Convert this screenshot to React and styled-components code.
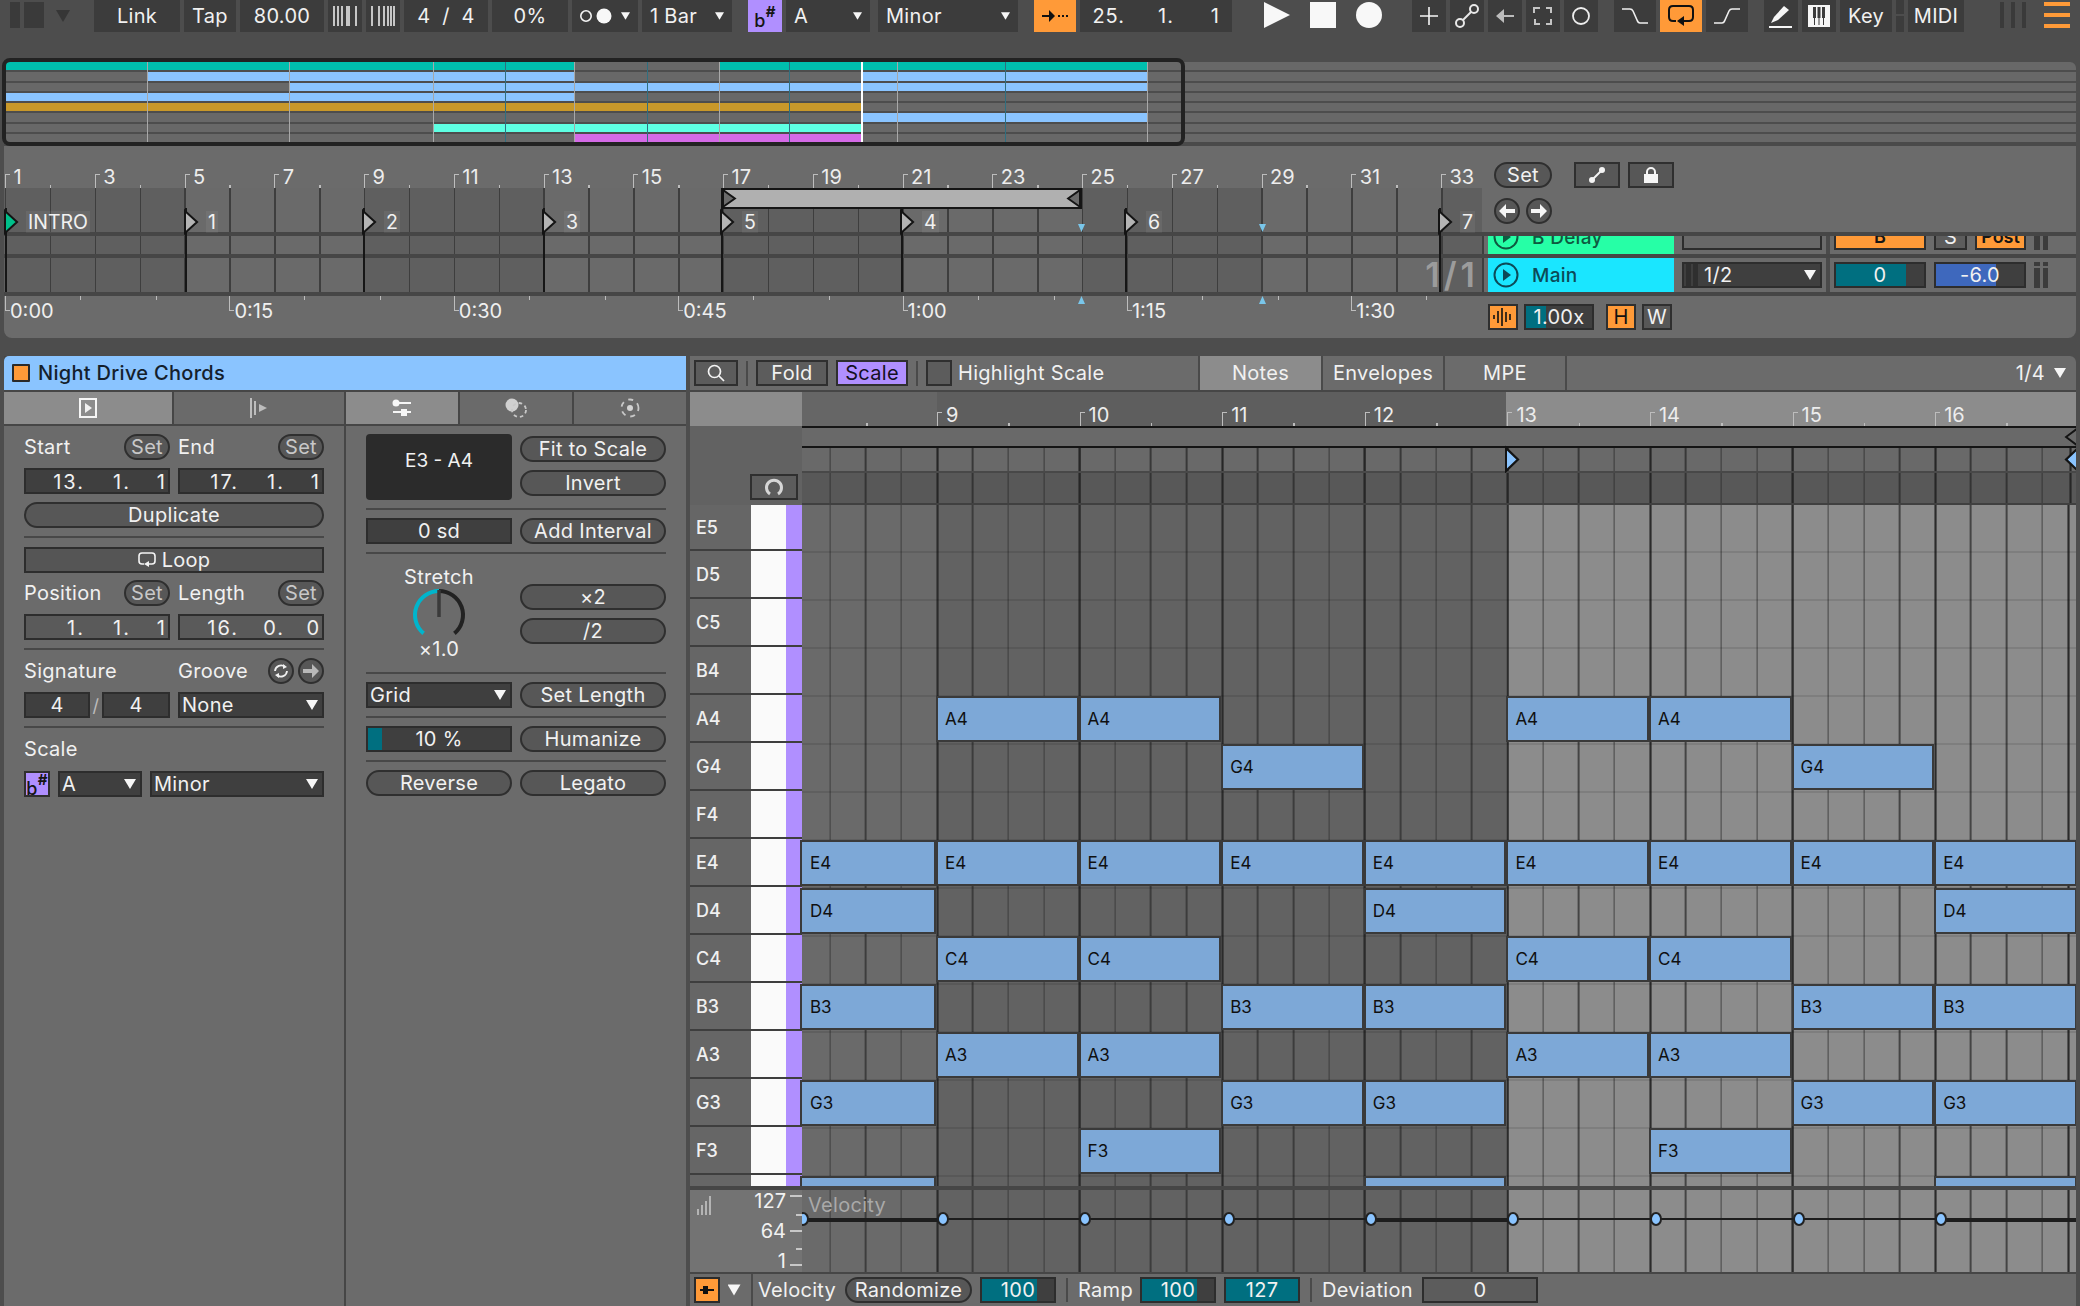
import React from 'react';
import styled, { createGlobalStyle, css } from 'styled-components';

const FONT = `"Inter","Noto Sans","Liberation Sans",sans-serif`;
const INK = '#f1f1f1';
const CELL = '#3c3c3c';
const PANEL = '#6b6b6b';
const LINE = '#2d2d2d';
const ORANGE = '#ff9a38';
const PURPLE = '#b08fff';
const TEAL = '#006f80';

const Global = createGlobalStyle`
  html, body { margin: 0; padding: 0; background: #4d4d4d; }
  body { font-family: ${FONT}; color: ${INK}; font-size: 20px; letter-spacing: .3px; -webkit-font-smoothing: antialiased; }
  * { box-sizing: border-box; }
`;

const Page = styled.div`
  width: 2080px; height: 1306px; overflow: hidden; background: #4d4d4d;
  display: flex; flex-direction: column;
`;

/* ---------- top bar ---------- */
const TopBar = styled.header`
  display: flex; height: 32px; flex: none; padding-left: 10px; align-items: stretch;
`;
const Cell = styled.div`
  flex: none; width: ${p => p.$w}px; margin-left: ${p => p.$ml || 0}px;
  background: ${p => p.$bg || CELL}; color: ${p => p.$fg || INK};
  display: flex; align-items: center; justify-content: center; font-size: 20px;
`;
const ShadeBar = styled.div`
  flex: none; width: ${p => p.$w}px; margin: 2px 0 4px ${p => p.$ml || 0}px; background: #3a3a3a;
`;
const CellRow = styled(Cell)`
  justify-content: space-between; padding: 0 8px;
`;
const Caret = styled.span`
  flex: none; display: inline-block; width: ${p => p.$s || 12}px; height: ${p => (p.$s || 12) * .85}px;
  background: ${p => p.$c || '#f6f6f6'}; clip-path: polygon(0 0, 100% 0, 50% 100%);
`;
const Flat = styled.span`font-size: 18px; letter-spacing: 0; color: #161616; font-weight: 600; line-height: 1;`;
const FlatSign = styled.span`font-size: 18px; color: #161616; font-weight: 500; line-height: 1; margin-top: 10px;`;
const SharpSign = styled.span`font-size: 15px; color: #161616; font-weight: 700; line-height: 1; margin-bottom: 10px;`;
const TimeGrid = styled.div`
  display: grid; width: 100%; height: 100%; align-items: center; text-align: right;
  grid-template-columns: ${p => p.$cols}; padding-right: ${p => p.$pr || 4}px;
  font-size: 20px; letter-spacing: ${p => p.$ls || 0}px;
`;

const Svg = styled.svg`display: block; flex: none; overflow: visible;`;

const BarsA = () => (
  <Svg width="24" height="20" viewBox="0 0 24 20" stroke="#f4f4f4" strokeWidth="1.5">
    <path d="M1 0v20M5 0v20M9 0v20M14 0v20M16 0v20M23 0v20" />
  </Svg>
);
const BarsB = () => (
  <Svg width="24" height="20" viewBox="0 0 24 20" stroke="#f4f4f4" strokeWidth="1.5">
    <path d="M1 0v20M8 0v20M13 0v20M17 0v20M20 0v20M23 0v20" />
  </Svg>
);
const MetroDots = () => (
  <Svg width="34" height="18" viewBox="0 0 34 18">
    <circle cx="6" cy="9" r="5.2" fill="none" stroke="#f4f4f4" strokeWidth="1.6" />
    <circle cx="24" cy="9" r="7.5" fill="#f8f8f8" />
  </Svg>
);
const FollowIcon = () => (
  <Svg width="26" height="16" viewBox="0 0 26 16">
    <path d="M0 8h11" stroke="#111" strokeWidth="2" />
    <path d="M7 2l6 6-6 6z" fill="#111" />
    <path d="M16 8h2M20 8h2M24 8h2" stroke="#111" strokeWidth="2" />
  </Svg>
);
const Icon = ({ kind }) => {
  switch (kind) {
    case 'plus': return <Svg width="20" height="20" viewBox="0 0 20 20" stroke="#f6f6f6" strokeWidth="1.6"><path d="M10 1v18M1 10h18" /></Svg>;
    case 'link': return <Svg width="24" height="24" viewBox="0 0 24 24" fill="none" stroke="#e8e8e8" strokeWidth="2"><circle cx="5" cy="19" r="4" /><circle cx="19" cy="5" r="4" /><path d="M8 16L16 8" /></Svg>;
    case 'back': return <Svg width="18" height="14" viewBox="0 0 18 14"><path d="M8 0L0 7l8 7V8h10V6H8z" fill="#bcbcbc" /></Svg>;
    case 'frame': return <Svg width="18" height="18" viewBox="0 0 18 18" fill="none" stroke="#c4c4c4" strokeWidth="2"><path d="M0 6V1h6M12 1h5v5M17 12v5h-5M6 17H1v-5" /></Svg>;
    case 'ring': return <Svg width="18" height="18" viewBox="0 0 18 18"><circle cx="9" cy="9" r="8" fill="none" stroke="#eee" strokeWidth="1.8" /></Svg>;
    case 'fall': return <Svg width="26" height="16" viewBox="0 0 26 16" fill="none" stroke="#efefef" strokeWidth="1.6"><path d="M0 1h8q2 0 3 2l4 9q1 3 3 3h8" /></Svg>;
    case 'rise': return <Svg width="26" height="16" viewBox="0 0 26 16" fill="none" stroke="#efefef" strokeWidth="1.6"><path d="M0 15h8q2 0 3-3l4-9q1-2 3-2h8" /></Svg>;
    case 'loop': return <Svg width="26" height="22" viewBox="0 0 26 22" fill="none" stroke="#111" strokeWidth="2"><path d="M8 16H5q-4 0-4-4V5q0-4 4-4h16q4 0 4 4v7q0 4-4 4h-7" /><path d="M16 11l-7 5 7 5z" fill="#111" stroke="none" /></Svg>;
    case 'pen': return <Svg width="24" height="24" viewBox="0 0 24 24"><path d="M2 19l3-6L15 2l5 4L9 16z" fill="#f6f6f6" /><path d="M0 23h23" stroke="#f6f6f6" strokeWidth="2" /></Svg>;
    case 'piano': return <Svg width="22" height="22" viewBox="0 0 22 22"><rect x="1" y="1" width="20" height="20" fill="#3c3c3c" stroke="#f6f6f6" strokeWidth="2" /><path d="M2 2h18v18H2z" fill="#f6f6f6" /><path d="M5 2h3v11H5zM9.5 2h3v11h-3zM14 2h3v11h-3z" fill="#3c3c3c" /><path d="M6.5 13v7M11 13v7M15.5 13v7" stroke="#3c3c3c" strokeWidth="1" /></Svg>;
    default: return null;
  }
};

const WhiteShape = styled.div`
  flex: none; width: 26px; margin-left: ${p => p.$ml}px; margin-top: 2px; height: 26px; background: #f8f8f8;
  clip-path: ${p => p.$clip || 'none'}; border-radius: ${p => p.$round ? '50%' : '0'};
`;
const SplitCell = styled.div`
  flex: none; margin-left: 4px; width: 8px; display: flex; flex-direction: column; gap: 2px;
`;
const SplitPart = styled.div`flex: ${p => p.$g}; background: ${CELL};`;
const BurgerWrap = styled.div`
  flex: none; margin: 2px 0 4px 18px; width: 26px; display: flex; flex-direction: column; justify-content: space-between;
`;
const BurgerLine = styled.div`height: 4px; background: ${ORANGE};`;

/* ---------- arrangement block ---------- */
const Block = styled.section`
  position: relative; flex: none; margin: 30px 4px 0 4px; width: 2072px;
`;
const Overview = styled.div`
  height: 80px; background: #4d4d4d; display: grid; grid-template-rows: repeat(8, 1fr); row-gap: 2px;
  border-radius: 6px 6px 0 0; overflow: hidden; position: relative;
`;
const OvRow = styled.div`display: flex; background: #686868; padding-left: 2px;`;
const OvClip = styled.div`
  flex: none; width: ${p => p.$w}px; background: ${p => p.$c || 'transparent'};
`;
const OvLine = styled.div`
  position: absolute; top: 0; bottom: 0; left: ${p => p.$x}px; width: ${p => p.$t || 1}px; background: ${p => p.$c || '#a8a8a8'};
`;
const OvFrame = styled.div`
  position: absolute; left: -2px; top: -4px; width: 1183px; height: 88px; border: 4px solid #222; border-radius: 8px; pointer-events: none;
`;
const DarkBar = styled.div`height: 4px; background: #4a4a4a;`;

const Timeline = styled.div`
  position: relative; display: grid; height: 192px; background: ${PANEL}; border-radius: 0 0 8px 8px; overflow: hidden;
  grid-template-columns: 1478px 594px;
  grid-template-rows: 42px 44px 4px 18px 4px 34px 4px 42px;
`;
const BAR2 = 89.75;
const Ruler = styled.div`display: flex; padding-left: 1px; overflow: hidden;`;
const BarCell = styled.div`
  position: relative; flex: none; width: ${p => p.$w}px; height: 100%; display: flex; align-items: flex-end;
  padding: 0 0 ${p => p.$pb || 0}px ${p => p.$pl || 8.5}px; font-size: 20px; line-height: 1; color: #ededed; letter-spacing: 0;
  &::before { content: ''; display: ${p => p.$plain ? 'none' : 'block'}; position: absolute; left: 0; bottom: 0; width: 4px; height: 13px;
    border-left: 1.5px solid #bdbdbd; border-top: 1.5px solid #bdbdbd; }
  &::after { content: ''; position: absolute; left: ${p => p.$tick || '50%'}; bottom: 0; width: 1.5px; height: 3px; background: #bdbdbd; }
`;
const TrackTop = styled.div`
  grid-row: span 2; display: grid; grid-template-columns: 26px 6px 26px 22px 46px 8px 46px;
  padding: 16px 0 0 12px; grid-template-rows: 26px 26px; row-gap: 10px; align-content: start;
`;
const laneBg = css`
  background-color: #666;
  background-image:
    repeating-linear-gradient(90deg, #3e3e3e 0 1.5px, transparent 1.5px 44.875px),
    repeating-linear-gradient(90deg, #5f5f5f 0 179.5px, #6a6a6a 179.5px 359px);
  background-position: 1px 0;
`;
const Lane = styled.div`
  ${laneBg}; display: flex; align-items: center; justify-content: flex-end; padding-right: 3px;
`;
const BigRatio = styled.span`font-size: 34px; font-weight: 600; color: #9c9c9c; line-height: 1; letter-spacing: 4px;`;
const Rule = styled.div`grid-column: 1 / -1; background: #464646;`;
const TimeRuler = styled.div`display: flex; padding-left: 1px; overflow: hidden;`;
const TimeCell = styled.div`
  position: relative; flex: none; width: 224.4px; padding: 5px 0 0 5px; font-size: 20px; color: #efefef;
  line-height: 20px; letter-spacing: 0;
  &::before { content: ''; position: absolute; left: 0; top: 0; width: 4px; height: 14px;
    border-left: 1.5px solid #bdbdbd; border-bottom: 1.5px solid #bdbdbd; }
  &::after { content: ''; position: absolute; left: 75px; top: 0; width: 75px; height: 4px;
    border-left: 1.5px solid #bdbdbd; border-right: 1.5px solid #bdbdbd; }
`;
const Pill = styled.div`
  height: 26px; border: 2px solid #2f2f2f; border-radius: 13px; background: #575757;
  display: flex; align-items: center; justify-content: center; white-space: nowrap;
  color: ${p => p.$dim ? '#c8c8c8' : INK};
  width: ${p => p.$w ? p.$w + 'px' : 'auto'}; flex: ${p => p.$w ? 'none' : '1'};
  grid-column: ${p => p.$span || 'auto'}; margin-left: ${p => p.$ml || 0}px;
`;
const Square = styled.div`
  height: 26px; border: 2px solid #2f2f2f; background: ${p => p.$bg || '#575757'};
  display: flex; align-items: center; justify-content: center; color: ${p => p.$fg || INK};
  width: ${p => p.$w ? p.$w + 'px' : 'auto'}; grid-column: ${p => p.$span || 'auto'}; flex: none;
  margin-left: ${p => p.$ml || 0}px;
`;
const RoundBtn = styled.div`
  width: 26px; height: 26px; border-radius: 50%; border: 2px solid #2f2f2f; background: #575757; flex: none;
  display: flex; align-items: center; justify-content: center; grid-column: ${p => p.$span || 'auto'};
`;
const ArrowGlyph = ({ dir, c }) => (
  <Svg width="16" height="14" viewBox="0 0 16 14" style={dir === 'r' ? { transform: 'scaleX(-1)' } : undefined}>
    <path d="M7 0L0 7l7 7V9h9V5H7z" fill={c || '#f6f6f6'} />
  </Svg>
);

const TrackStrip = styled.div`overflow: hidden; position: relative;`;
const TrackInner = styled.div`
  display: flex; height: 34px; margin-top: ${p => p.$offset || 0}px; border-left: 2px solid #3e3e3e; padding-left: 4px; align-items: stretch;
`;
const TrackName = styled.div`
  flex: none; width: 186px; background: ${p => p.$c}; color: ${p => p.$fg}; display: flex; align-items: center; gap: 13px; padding-left: 5px;
  font-weight: 500; font-size: 19px;
`;
const TrackCtl = styled.div`flex: none; display: flex; align-items: center; margin-left: ${p => p.$ml || 0}px;`;
const TrackFoot = styled.div`display: flex; align-items: center; align-self: start; margin-top: 8px;`;
const Vert = styled.div`flex: none; width: 4px; background: #4a4a4a; margin-left: 4px;`;
const Meter = styled.div`flex: none; margin: 4px 0 4px 8px; width: 14px; display: flex; justify-content: space-between;`;
const MeterBar = styled.div`width: 5.5px; background: linear-gradient(#3c3c3c 0 4px, transparent 4px 6px, #3c3c3c 6px);`;
const Field = styled.div`
  height: 26px; border: 2px solid ${LINE}; flex: ${p => p.$w ? 'none' : '1'}; width: ${p => p.$w ? p.$w + 'px' : 'auto'};
  background: ${p => p.$fill != null
    ? `linear-gradient(90deg, ${p.$c || TEAL} ${p.$fill}%, #3f3f3f ${p.$fill}%)`
    : (p.$bg || '#3f3f3f')};
  display: flex; align-items: center; justify-content: ${p => p.$start ? 'space-between' : 'center'};
  padding: ${p => p.$start ? '0 4px 0 2px' : '0'}; color: ${INK}; min-width: 0;
  margin-left: ${p => p.$ml || 0}px; white-space: nowrap;
`;
const DragDots = styled.span`
  flex: none; width: 12px; height: 22px; margin-right: 6px; display: block;
  background: repeating-linear-gradient(90deg, #2f2f2f 0 5px, transparent 5px 7px);
`;
const Locators = styled.div`
  position: absolute; left: 0; top: 62px; width: 1478px; height: 84px; pointer-events: none;
`;
const Locator = styled.div`
  position: absolute; left: ${p => p.$x}px; top: 0; bottom: 0; width: 2px; background: #161616;
`;
const LocFlag = styled.div`
  position: absolute; left: 0; top: 2px; display: flex; align-items: center; height: 24px; gap: 0; white-space: nowrap;
`;
const LocName = styled.span`
  font-size: 19.5px; line-height: 22px; margin-left: 8px; padding: 0 2px; background: rgba(255,255,255,.06); letter-spacing: 0;
`;
const Brace = styled.div`
  position: absolute; left: 717px; top: 42px; width: 361px; height: 21px; background: #b0b0b0;
  border-top: 2px solid #151515; border-bottom: 2px solid #151515; border-left: 2px solid #151515; border-right: 2px solid #151515;
  display: flex; justify-content: space-between; align-items: center;
`;
const CueMark = styled.div`
  position: absolute; left: ${p => p.$x}px; top: ${p => p.$y}px; width: 7px; height: 8px; background: #79c6ea;
  clip-path: ${p => p.$up ? 'polygon(50% 0, 100% 100%, 0 100%)' : 'polygon(0 0, 100% 0, 50% 100%)'};
`;

/* ---------- lower area ---------- */
const Lower = styled.div`
  flex: none; height: 950px; margin: 18px 4px 0 4px; display: flex; gap: 4px;
`;
const ClipPanel = styled.section`
  flex: none; width: 682px; display: flex; flex-direction: column; background: #464646;
`;
const TitleBar = styled.div`
  height: 34px; flex: none; background: #8ac4ff; color: #14202c; display: flex; align-items: center; gap: 8px; padding-left: 8px;
  font-size: 20px; font-weight: 500; border-radius: 5px 0 0 0;
`;
const Check = styled.div`
  width: 18px; height: 18px; border: 2px solid #2a2a2a; background: ${ORANGE}; border-radius: 1px;
`;
const TabStrip = styled.div`
  flex: none; height: 34px; margin-top: 2px; padding-bottom: 2px; display: grid; grid-template-columns: 168px 170px 112px 112px 112px; column-gap: 2px;
`;
const ClipTab = styled.div`
  background: ${p => p.$on ? '#8c8c8c' : '#6a6a6a'}; display: flex; align-items: center; justify-content: center;
`;
const ClipBody = styled.div`flex: 1; display: grid; grid-template-columns: 340px 340px; column-gap: 2px;`;
const Col = styled.div`background: ${PANEL}; padding: 8px 20px 0; display: flex; flex-direction: column;`;
const Row = styled.div`
  flex: none; display: flex; align-items: center; min-height: 26px; gap: ${p => p.$gap ?? 8}px; margin-top: ${p => p.$mt || 0}px;
`;
const HalfRow = styled.div`
  flex: none; display: grid; grid-template-columns: 146px 146px; column-gap: 8px; height: 26px; margin-top: ${p => p.$mt || 0}px; align-items: center;
`;
const LabelSet = styled.div`display: flex; align-items: center; justify-content: space-between;`;
const Divider = styled.div`height: 2px; flex: none; background: #484848; margin-top: ${p => p.$mt || 0}px;`;
const Label = styled.div`color: ${INK}; flex: none; line-height: 24px; margin-top: ${p => p.$mt || 0}px; width: ${p => p.$w ? p.$w + 'px' : 'auto'}; margin-left: ${p => p.$ml || 0}px;`;
const MiniIconBtn = styled(RoundBtn)``;
const RoundPair = styled.div`display: flex; gap: 4px;`;
const Split = styled.div`display: grid; grid-template-columns: 146px 146px; column-gap: 8px; margin-top: ${p => p.$mt || 0}px; flex: none; min-height: ${p => p.$h || 0}px;`;
const Stack = styled.div`
  display: flex; flex-direction: column; gap: ${p => p.$gap || 8}px; padding-top: ${p => p.$pt || 0}px;
  & > * { flex: none; }
`;
const RangeBox = styled.div`
  height: 66px; background: #2b2b2b; border-radius: 4px; display: flex; justify-content: center; padding-top: 15px; font-size: 19px; letter-spacing: 0;
`;
const KnobWrap = styled.div`display: flex; flex-direction: column; align-items: center;`;
const KnobValue = styled.div`margin-top: -4px; line-height: 22px;`;
const KnobLabel = styled.div`line-height: 22px;`;
const Slash = styled.span`flex: none; width: 12px; text-align: center; font-size: 18px; color: #bdbdbd;`;

/* ---------- piano roll ---------- */
const RollPanel = styled.section`
  flex: none; width: 1386px; display: flex; flex-direction: column; background: #464646; border-radius: 0 6px 0 0; overflow: hidden;
`;
const RollBar = styled.div`
  flex: none; height: 34px; background: ${PANEL}; display: flex; align-items: center; padding-left: 4px;
`;
const RollTab = styled.div`
  flex: none; width: ${p => p.$w}px; height: 100%; background: ${p => p.$on ? '#8c8c8c' : 'transparent'}; border-left: 2px solid #4a4a4a;
  margin-left: ${p => p.$ml || 0}px; display: flex; align-items: center; justify-content: center;
`;
const MiniSep = styled.div`flex: none; width: 2px; height: 25px; background: #4a4a4a; margin: 0 8px;`;
const Grow = styled.div`flex: 1;`;
const Quant = styled.div`display: flex; align-items: center; gap: 9px; padding-right: 10px;`;
const RollHead = styled.div`
  flex: none; height: 113px; margin-top: 2px; display: grid; grid-template-columns: 112px 1274px;
`;
const HeadSide = styled.div`
  background: linear-gradient(#8c8c8c 0 34px, #626262 34px); display: flex; align-items: flex-end; justify-content: flex-end; padding: 0 4px 5px 0;
`;
const HeadMain = styled.div`
  display: grid; grid-template-rows: 34px 2px 18px 2px 23px 2px 30px 2px; background: #1b1b1b; overflow: hidden;
`;
const HeadRuler = styled.div`
  display: flex; background: linear-gradient(90deg, #666 0 135px, #5e5e5e 135px 704px, #8c8c8c 704px);
`;
const HeadLine = styled.div`background: ${p => p.$c || '#151515'};`;
const StripA = styled.div`background: #696969; position: relative; display: flex; justify-content: flex-end; align-items: center;`;
const gridLines = css`
  background-image:
    repeating-linear-gradient(90deg, #262626 0 2px, transparent 2px 142.6px),
    repeating-linear-gradient(90deg, rgba(40,40,40,.75) 0 1.5px, transparent 1.5px 35.65px);
  background-position: -8.4px 0;
`;
const StripB = styled.div`
  ${gridLines}; background-color: ${p => p.$c}; position: relative; display: flex; justify-content: space-between; align-items: center;
  padding-left: 704px;
`;
const RollBody = styled.div`
  flex: none; height: 681px; display: grid; grid-template-columns: 112px 1274px; overflow: hidden;
`;
const Keys = styled.div`display: grid; grid-template-rows: 46px repeat(14, 48px); align-content: start;`;
const KeyRow = styled.div`
  display: grid; grid-template-columns: 61px 35px 16px; border-bottom: 2px solid #3e3e3e; background: #666;
  align-items: stretch;
`;
const KeyName = styled.div`display: flex; align-items: center; padding-left: 6px; font-size: 18px; font-weight: 500; color: #f0f0f0; letter-spacing: 0;`;
const WhiteKey = styled.div`background: #fafafa;`;
const PurpleKey = styled.div`background: ${PURPLE};`;
const rollBg = css`
  background-image:
    repeating-linear-gradient(90deg, #2b2b2b 0 2px, transparent 2px 142.6px),
    repeating-linear-gradient(90deg, rgba(50,50,50,.8) 0 1.5px, transparent 1.5px 35.65px),
    linear-gradient(90deg, #6a6a6a 0 135px, #626262 135px 704px, #8c8c8c 704px);
  background-position: -8.4px 0, -8.4px 0, 0 0;
`;
const Roll = styled.div`
  position: relative; ${rollBg};
  display: grid; grid-template-columns: 135px repeat(8, 142.6px); grid-template-rows: 46px repeat(14, 48px); align-content: start;
  &::before { content: ''; position: absolute; inset: 0; pointer-events: none;
    background: repeating-linear-gradient(180deg, rgba(0,0,0,.1) 0 2px, transparent 2px 48px); background-position: 0 -2px; background-size: 100% 48px; }
`;
const Note = styled.div`
  grid-column: ${p => p.$c}; grid-row: ${p => p.$r}; position: relative;
  margin: 3px 3px 3px ${p => p.$c === 1 ? 0 : 1}px;
  background: #7da8d7; outline: 2px solid #3a3a3a; outline-offset: 0; color: #101010; display: flex; align-items: center; padding-left: ${p => p.$c === 1 ? 8 : 7}px;
  font-size: 17px; letter-spacing: 0;
`;
const VelSec = styled.div`
  flex: none; height: 82px; margin-top: 4px; display: grid; grid-template-columns: 112px 1274px;
`;
const VelSide = styled.div`
  background: #737373; position: relative; display: flex; padding-right: 16px; flex-direction: column; gap: 8px; align-items: flex-end;
`;
const VelNum = styled.div`height: 22px; line-height: 22px; letter-spacing: 0;`;
const VelIconAt = styled.div`position: absolute; left: 6px; top: 5px;`;
const TickAt = styled.div`position: absolute; left: 100px; top: 0;`;
const VelMain = styled.div`position: relative; ${rollBg};`;
const VelCaption = styled.div`position: absolute; left: 6px; top: 3px; color: #a9a9a9;`;
const VelChart = styled.svg`position: absolute; inset: 0; width: 100%; height: 100%;`;
const RollFoot = styled.div`
  flex: none; height: 32px; margin-top: 2px; background: ${PANEL}; display: flex; align-items: center; padding-left: 4px;
`;
const FootSep = styled.div`
  flex: none; width: 2px; height: ${p => p.$full ? 32 : 24}px; background: #4a4a4a; margin: 0 ${p => p.$mr ?? 10}px 0 10px;
`;
const FootBtn = styled.div`
  flex: none; width: 26px; height: 26px; background: ${ORANGE}; border: 2px solid #2b2b2b; display: flex; align-items: center; justify-content: center;
`;

/* ---------- data ---------- */
const overview = [
  [[6, 574, '#00bfae'], [574, 719], [719, 1147, '#00bfae']],
  [[6, 147], [147, 574, '#8ac4ff'], [574, 861], [861, 1147, '#8ac4ff']],
  [[6, 289], [289, 1147, '#8ac4ff']],
  [[6, 574, '#8ac4ff'], [574, 1147]],
  [[6, 861, '#c8982a'], [861, 1147]],
  [[6, 861], [861, 1147, '#8ac4ff']],
  [[6, 433], [433, 861, '#5effe3'], [861, 1147]],
  [[6, 574], [574, 861, '#d46ae6'], [861, 1147]],
];
const ovLines = [[147], [289], [433], [574], [719], [861, '#ffffff', 2], [897], [1147]];
const ovDark = [505, 647, 789, 1005];

const bars = Array.from({ length: 17 }, (_, i) => 1 + i * 2);
const times = ['0:00', '0:15', '0:30', '0:45', '1:00', '1:15', '1:30'];
const locators = [
  { x: 1, name: 'INTRO', c: '#00c08a' }, { x: 181, name: '1' }, { x: 359, name: '2' }, { x: 539, name: '3' },
  { x: 717, name: '5' }, { x: 897, name: '4' }, { x: 1121, name: '6' }, { x: 1435, name: '7' },
];
const keys = ['E5', 'D5', 'C5', 'B4', 'A4', 'G4', 'F4', 'E4', 'D4', 'C4', 'B3', 'A3', 'G3', 'F3', ''];
const R = Object.fromEntries(keys.map((k, i) => [k || 'E3', i + 1]));
const pattern = {
  A: ['A4', 'E4', 'C4', 'A3'],
  B: ['A4', 'E4', 'C4', 'A3', 'F3'],
  C: ['G4', 'E4', 'B3', 'G3'],
  D: ['E4', 'D4', 'B3', 'G3', 'E3'],
};
const columns = [['D', 1], ['A', 2], ['B', 3], ['C', 4], ['D', 5], ['A', 6], ['B', 7], ['C', 8], ['D', 9]];
const rollRuler = [9, 10, 11, 12, 13, 14, 15, 16];
const velDots = [1, 141, 283, 427, 569, 711, 854, 997, 1139];

const BeatField = ({ a, b, c, bg }) => (
  <Field $bg={bg}>
    <TimeGrid $cols="1fr 46px 36px" $ls={2} $pr={1}>
      <span>{a}.</span><span>{b}.</span><span>{c}</span>
    </TimeGrid>
  </Field>
);

const Tri = ({ right, fill, h = 20 }) => (
  <Svg width="13" height={h} viewBox="0 0 13 20" preserveAspectRatio="none">
    <path d={right ? 'M13 0L1 10l12 10z' : 'M0 0l12 10L0 20z'} fill={fill} stroke="#141414" strokeWidth="2" />
  </Svg>
);

const Knob = () => (
  <Svg width="58" height="54" viewBox="-29 -27 58 54">
    <path d="M-15.4 18.4 A24 24 0 0 1 0 -24" fill="none" stroke="#00b5cc" strokeWidth="4" />
    <path d="M0 -24 A24 24 0 0 1 15.4 18.4" fill="none" stroke="#222" strokeWidth="4" />
    <path d="M0 -25V2" stroke="#3a3a3a" strokeWidth="3.5" />
  </Svg>
);

const PlayDisc = ({ c }) => (
  <Svg width="26" height="26" viewBox="0 0 26 26">
    <circle cx="13" cy="13" r="11.5" fill="none" stroke={c} strokeWidth="2" />
    <path d="M10 7l8 6-8 6z" fill={c} />
  </Svg>
);

const TrackRow = ({ offset, name, c, fg, children }) => (
  <TrackStrip>
    <TrackInner $offset={offset}>
      <TrackName $c={c} $fg={fg}><PlayDisc c={fg} />{name}</TrackName>
      {children}
      <Meter><MeterBar /><MeterBar /></Meter>
    </TrackInner>
  </TrackStrip>
);

export default function App() {
  return (
    <Page>
      <Global />
      <TopBar>
        <ShadeBar $w={10} /><ShadeBar $w={20} $ml={4} />
        <Cell $w={14} $ml={12} $bg="transparent"><Caret $s={14} $c="#363636" /></Cell>
        <Cell $w={86} $ml={24}>Link</Cell>
        <Cell $w={52} $ml={4}>Tap</Cell>
        <Cell $w={84} $ml={4}>80.00</Cell>
        <Cell $w={34} $ml={4}><BarsA /></Cell>
        <Cell $w={34} $ml={4}><BarsB /></Cell>
        <Cell $w={84} $ml={4}>4&nbsp; /&nbsp; 4</Cell>
        <Cell $w={76} $ml={4}>0%</Cell>
        <CellRow $w={66} $ml={4}><MetroDots /><Caret $s={9} /></CellRow>
        <CellRow $w={90} $ml={4}>1 Bar<Caret $s={9} /></CellRow>
        <Cell $w={34} $ml={16} $bg={PURPLE}><FlatSign>b</FlatSign><SharpSign>#</SharpSign></Cell>
        <CellRow $w={84} $ml={4}>A<Caret $s={9} /></CellRow>
        <CellRow $w={140} $ml={8}>Minor<Caret $s={9} /></CellRow>
        <Cell $w={42} $ml={16} $bg={ORANGE}><FollowIcon /></Cell>
        <Cell $w={152} $ml={4}><TimeGrid $cols="1fr 49px 46px" $pr={12} $ls={1}><span>25.</span><span>1.</span><span>1</span></TimeGrid></Cell>
        <WhiteShape $ml={32} $clip="polygon(0 0, 100% 50%, 0 100%)" />
        <WhiteShape $ml={20} />
        <WhiteShape $ml={20} $round />
        <Cell $w={34} $ml={30}><Icon kind="plus" /></Cell>
        <Cell $w={34} $ml={4}><Icon kind="link" /></Cell>
        <Cell $w={34} $ml={4}><Icon kind="back" /></Cell>
        <Cell $w={34} $ml={4}><Icon kind="frame" /></Cell>
        <Cell $w={34} $ml={4}><Icon kind="ring" /></Cell>
        <Cell $w={42} $ml={16}><Icon kind="fall" /></Cell>
        <Cell $w={42} $ml={4} $bg={ORANGE}><Icon kind="loop" /></Cell>
        <Cell $w={42} $ml={4}><Icon kind="rise" /></Cell>
        <Cell $w={34} $ml={16}><Icon kind="pen" /></Cell>
        <Cell $w={34} $ml={4}><Icon kind="piano" /></Cell>
        <Cell $w={52} $ml={4}>Key</Cell>
        <SplitCell><SplitPart $g={14} /><SplitPart $g={16} /></SplitCell>
        <Cell $w={56} $ml={4}>MIDI</Cell>
        <ShadeBar $w={4} $ml={36} /><ShadeBar $w={4} $ml={7} /><ShadeBar $w={4} $ml={7} />
        <BurgerWrap><BurgerLine /><BurgerLine /><BurgerLine /></BurgerWrap>
      </TopBar>

      <Block>
        <Overview>
          {overview.map((row, i) => (
            <OvRow key={i}>
              {row.map(([a, b, c], j) => <OvClip key={j} $w={b - a} $c={c} />)}
            </OvRow>
          ))}
          {ovLines.map(([x, c, t]) => <OvLine key={x} $x={x - 4} $c={c} $t={t} />)}
          {ovDark.map(x => <OvLine key={x} $x={x - 4} $c="#2f6f80" />)}
        </Overview>
        <OvFrame />
        <DarkBar />
        <Timeline>
          <Ruler>{bars.map(n => <BarCell key={n} $w={BAR2} $pb={1}>{n}</BarCell>)}</Ruler>
          <TrackTop>
            <Pill $span="1 / 4">Set</Pill>
            <Square $span="5 / 6">
              <Svg width="16" height="16" viewBox="0 0 16 16"><circle cx="3" cy="13" r="3" fill="#f4f4f4" /><circle cx="13" cy="3" r="3" fill="#f4f4f4" /><path d="M3 13L13 3" stroke="#f4f4f4" strokeWidth="2" /></Svg>
            </Square>
            <Square $span="7 / 8">
              <Svg width="14" height="16" viewBox="0 0 14 16"><path d="M3 8V5a4 4 0 0 1 8 0v3" fill="none" stroke="#f6f6f6" strokeWidth="2" /><rect y="7" width="14" height="9" fill="#f6f6f6" /></Svg>
            </Square>
            <RoundBtn $span="1 / 2"><ArrowGlyph /></RoundBtn>
            <RoundBtn $span="3 / 4"><ArrowGlyph dir="r" /></RoundBtn>
          </TrackTop>
          <Lane />
          <Rule />
          <Lane />
          <TrackRow offset={-16} name="B Delay" c="#26ffa6" fg="#0e5a40">
            <TrackCtl $ml={8}><Field $w={140} $bg="#686868" /></TrackCtl>
            <Vert />
            <TrackCtl $ml={4}>
              <Field $w={92} $bg={ORANGE}><Flat>B</Flat></Field>
              <Field $w={33} $ml={8} $bg="#5c5c5c">S</Field>
              <Field $w={51} $ml={8} $bg={ORANGE}><Flat>Post</Flat></Field>
            </TrackCtl>
          </TrackRow>
          <Rule />
          <Lane><BigRatio>1/1</BigRatio></Lane>
          <TrackRow name="Main" c="#1ae6ff" fg="#0c4a58">
            <TrackCtl $ml={8}><Field $w={140} $start>
              <Row $gap={0}><DragDots />1/2</Row><Caret $s={12} />
            </Field></TrackCtl>
            <Vert />
            <TrackCtl $ml={4}>
              <Field $w={92} $fill={80}>0</Field>
              <Field $w={92} $ml={8} $fill={68} $c="#3e68bd">-6.0</Field>
            </TrackCtl>
          </TrackRow>
          <Rule />
          <TimeRuler>{times.map(t => <TimeCell key={t}>{t}</TimeCell>)}</TimeRuler>
          <TrackFoot>
            <Square $w={30} $ml={6} $bg={ORANGE}>
              <Svg width="20" height="18" viewBox="0 0 20 18" stroke="#111" strokeWidth="1.6"><path d="M1 7v4M5 3v12M9 0v18M13 4v10M17 6v6" /></Svg>
            </Square>
            <Field $w={70} $ml={6} $fill={30}>1.00x</Field>
            <Square $w={30} $ml={12} $bg={ORANGE} $fg="#111">H</Square>
            <Square $w={30} $ml={6}>W</Square>
          </TrackFoot>
          <Brace>
            <Tri fill="#6b6b6b" h={17} /><Tri right fill="#6b6b6b" h={17} />
          </Brace>
          <Locators>
            {locators.map(l => (
              <Locator key={l.x} $x={l.x}>
                <LocFlag>
                  <Tri fill={l.c || '#b4b4b4'} h={22} />
                  <LocName>{l.name}</LocName>
                </LocFlag>
              </Locator>
            ))}
          </Locators>
          <CueMark $x={1074} $y={78} />
          <CueMark $x={1255} $y={78} />
          <CueMark $x={1074} $y={150} $up />
          <CueMark $x={1255} $y={150} $up />
        </Timeline>
      </Block>

      <Lower>
        <ClipPanel>
          <TitleBar><Check />Night Drive Chords</TitleBar>
          <TabStrip>
            <ClipTab $on>
              <Svg width="18" height="20" viewBox="0 0 18 20"><rect x="1" y="1" width="16" height="18" fill="none" stroke="#f6f6f6" strokeWidth="2" /><path d="M6 5l7 5-7 5z" fill="#f0f0f0" /></Svg>
            </ClipTab>
            <ClipTab>
              <Svg width="18" height="20" viewBox="0 0 18 20" fill="#bdbdbd"><path d="M0 0h2v20H0zM4 3h2v14H4zM9 6l8 4-8 4z" /></Svg>
            </ClipTab>
            <ClipTab $on>
              <Svg width="20" height="18" viewBox="0 0 20 18" fill="#f6f6f6"><circle cx="4" cy="4" r="3.5" /><path d="M4 3h15v2H4zM1 12h18v2H1z" /><rect x="9" y="10" width="6" height="7" /></Svg>
            </ClipTab>
            <ClipTab>
              <Svg width="22" height="20" viewBox="0 0 22 20"><circle cx="7" cy="7" r="6.5" fill="#d0d0d0" /><circle cx="14" cy="12" r="7" fill="none" stroke="#c8c8c8" strokeWidth="1.8" strokeDasharray="3.5 3" /></Svg>
            </ClipTab>
            <ClipTab>
              <Svg width="20" height="20" viewBox="0 0 20 20"><circle cx="10" cy="10" r="8.5" fill="none" stroke="#c8c8c8" strokeWidth="1.8" strokeDasharray="5 5" strokeDashoffset="2" /><circle cx="10" cy="10" r="3" fill="#d4d4d4" /></Svg>
            </ClipTab>
          </TabStrip>
          <ClipBody>
            <Col>
              <HalfRow>
                <LabelSet>Start<Pill $w={46} $dim>Set</Pill></LabelSet>
                <LabelSet>End<Pill $w={46} $dim>Set</Pill></LabelSet>
              </HalfRow>
              <HalfRow $mt={8}><BeatField a={13} b={1} c={1} /><BeatField a={17} b={1} c={1} /></HalfRow>
              <Row $mt={8}><Pill>Duplicate</Pill></Row>
              <Divider $mt={8} />
              <Row $mt={9}>
                <Field $bg="#555"><Row $gap={6}>
                  <Svg width="18" height="16" viewBox="0 0 18 16" fill="none" stroke="#f4f4f4" strokeWidth="1.6"><path d="M6 12H4q-3 0-3-3V4q0-3 3-3h10q3 0 3 3v5q0 3-3 3h-4" /><path d="M11 9l-5 3 5 3z" fill="#f4f4f4" stroke="none" /></Svg>
                  Loop
                </Row></Field>
              </Row>
              <HalfRow $mt={7}>
                <LabelSet>Position<Pill $w={46} $dim>Set</Pill></LabelSet>
                <LabelSet>Length<Pill $w={46} $dim>Set</Pill></LabelSet>
              </HalfRow>
              <HalfRow $mt={8}>
                <BeatField a={1} b={1} c={1} bg="#5a5a5a" />
                <BeatField a={16} b={0} c={0} bg="#5a5a5a" />
              </HalfRow>
              <Divider $mt={8} />
              <HalfRow $mt={8}>
                <Label>Signature</Label>
                <LabelSet>Groove
                  <RoundPair>
                    <MiniIconBtn><Svg width="16" height="16" viewBox="0 0 16 16" fill="none" stroke="#f0f0f0" strokeWidth="1.8"><path d="M2 8a6 6 0 0 1 10-4M14 8a6 6 0 0 1-10 4" /><path d="M10 1l4 3-4 2zM6 15l-4-3 4-2z" fill="#f0f0f0" stroke="none" /></Svg></MiniIconBtn>
                    <MiniIconBtn><ArrowGlyph dir="r" c="#b8b8b8" /></MiniIconBtn>
                  </RoundPair>
                </LabelSet>
              </HalfRow>
              <HalfRow $mt={8}>
                <Row $gap={0}><Field $w={66}>4</Field><Slash>/</Slash><Field $w={68}>4</Field></Row>
                <Field $start>None<Caret /></Field>
              </HalfRow>
              <Divider $mt={8} />
              <Label $mt={9}>Scale</Label>
              <Row $mt={10} $gap={8}>
                <Square $w={26} $bg={PURPLE}><FlatSign>b</FlatSign><SharpSign>#</SharpSign></Square>
                <Field $w={84} $start>A<Caret /></Field>
                <Field $w={174} $start>Minor<Caret /></Field>
              </Row>
            </Col>

            <Col>
              <Split>
                <RangeBox>E3 - A4</RangeBox>
                <Stack $gap={8} $pt={2}><Pill>Fit to Scale</Pill><Pill>Invert</Pill></Stack>
              </Split>
              <Divider $mt={8} />
              <HalfRow $mt={8}><Field>0 sd</Field><Pill>Add Interval</Pill></HalfRow>
              <Divider $mt={8} />
              <Split $mt={12} $h={98}>
                <KnobWrap>
                  <KnobLabel>Stretch</KnobLabel>
                  <Knob />
                  <KnobValue>×1.0</KnobValue>
                </KnobWrap>
                <Stack $gap={8} $pt={18}><Pill>×2</Pill><Pill>/2</Pill></Stack>
              </Split>
              <Divider $mt={8} />
              <HalfRow $mt={8}><Field $start>Grid<Caret /></Field><Pill>Set Length</Pill></HalfRow>
              <Divider $mt={8} />
              <HalfRow $mt={8}><Field $fill={10}>10 %</Field><Pill>Humanize</Pill></HalfRow>
              <Divider $mt={8} />
              <HalfRow $mt={8}><Pill>Reverse</Pill><Pill>Legato</Pill></HalfRow>
            </Col>
          </ClipBody>
        </ClipPanel>

        <RollPanel>
          <RollBar>
            <Square $w={44} $bg="#5c5c5c">
              <Svg width="18" height="18" viewBox="0 0 18 18" fill="none" stroke="#f4f4f4" strokeWidth="1.7"><circle cx="7.5" cy="7.5" r="6" /><path d="M12 12l5 5" /></Svg>
            </Square>
            <MiniSep />
            <Square $w={72} $bg="#5c5c5c">Fold</Square>
            <Square $w={72} $ml={8} $bg={PURPLE} $fg="#14101f">Scale</Square>
            <MiniSep />
            <Square $w={26} $bg="#5c5c5c" />
            <Label $ml={6}>Highlight Scale</Label>
            <Grow />
            <RollTab $w={123} $on>Notes</RollTab>
            <RollTab $w={122}>Envelopes</RollTab>
            <RollTab $w={122}>MPE</RollTab>
            <RollTab $w={511}>
              <Grow />
              <Quant>1/4<Caret /></Quant>
            </RollTab>
          </RollBar>
          <RollHead>
            <HeadSide>
              <Square $w={48} $bg="#5c5c5c">
                <Svg width="18" height="18" viewBox="0 0 18 18" fill="none" stroke="#d6d6d6" strokeWidth="3"><path d="M5 16A7.5 7.5 0 1 1 13 16" /></Svg>
              </Square>
            </HeadSide>
            <HeadMain>
              <HeadRuler>
                <BarCell $w={135} $pb={1} $plain $tick="64px" />
                {rollRuler.map(n => <BarCell key={n} $w={142.6} $pb={1} $pl={9}>{n}</BarCell>)}
              </HeadRuler>
              <HeadLine />
              <StripA><Tri right fill="#696969" h={18} /></StripA>
              <HeadLine />
              <StripB $c="#696969"><Tri fill="#8ac4ff" h={23} /><Tri right fill="#8ac4ff" h={23} /></StripB>
              <HeadLine $c="#484848" />
              <StripB $c="#585858" />
              <HeadLine $c="#404040" />
            </HeadMain>
          </RollHead>
          <RollBody>
            <Keys>
              {keys.map(k => (
                <KeyRow key={k || 'E3'}>
                  <KeyName>{k}</KeyName><WhiteKey /><PurpleKey />
                </KeyRow>
              ))}
            </Keys>
            <Roll>
              {columns.flatMap(([p, c]) => pattern[p].map(n => (
                <Note key={`${c}${n}`} $c={c} $r={R[n]}>{n === 'E3' ? '' : n}</Note>
              )))}
            </Roll>
          </RollBody>
          <VelSec>
            <VelSide>
              <VelIconAt>
                <Svg width="16" height="20" viewBox="0 0 16 20" stroke="#d8d8d8" strokeWidth="1.3"><path d="M2 14v6M6 10v10M10 6v14M14 1v19" /></Svg>
              </VelIconAt>
              <VelNum>127</VelNum>
              <VelNum>64</VelNum>
              <VelNum>1</VelNum>
              <TickAt>
                <Svg width="12" height="82" viewBox="0 0 12 82" stroke="#e4e4e4" strokeWidth="1.5"><path d="M0 6h12M6 25h6M0 41h12M6 59h6M0 75h12" /></Svg>
              </TickAt>
            </VelSide>
            <VelMain>
              <VelCaption>Velocity</VelCaption>
              <VelChart viewBox="0 0 1274 82" preserveAspectRatio="none">
                <path d="M1 29H1274" stroke="#1d1d1d" strokeWidth="2" />
                <path d="M1 30H141M569 30H711M1139 30H1274" stroke="#1d1d1d" strokeWidth="4" />
                {velDots.map(x => <ellipse key={x} cx={x} cy="29" rx="5" ry="6" fill="#8ac4ff" stroke="#222" strokeWidth="2" />)}
              </VelChart>
            </VelMain>
          </VelSec>
          <RollFoot>
            <FootBtn>
              <Svg width="14" height="10" viewBox="0 0 14 10"><path d="M0 5h14" stroke="#111" strokeWidth="2" /><path d="M3 1h5v8H3z" fill="#111" /></Svg>
            </FootBtn>
            <Cell $w={14} $ml={7} $bg="transparent"><Caret $s={13} /></Cell>
            <FootSep $full $mr={5} />
            <Label $w={87}>Velocity</Label>
            <Pill $w={127}>Randomize</Pill>
            <Field $w={76} $ml={8} $fill={76}>100</Field>
            <FootSep />
            <Label $w={62}>Ramp</Label>
            <Field $w={76} $fill={76}>100</Field>
            <Field $w={76} $ml={8} $fill={100}>127</Field>
            <FootSep />
            <Label $w={100}>Deviation</Label>
            <Field $w={116} $bg="#5c5c5c">0</Field>
          </RollFoot>
        </RollPanel>
      </Lower>
    </Page>
  );
}
